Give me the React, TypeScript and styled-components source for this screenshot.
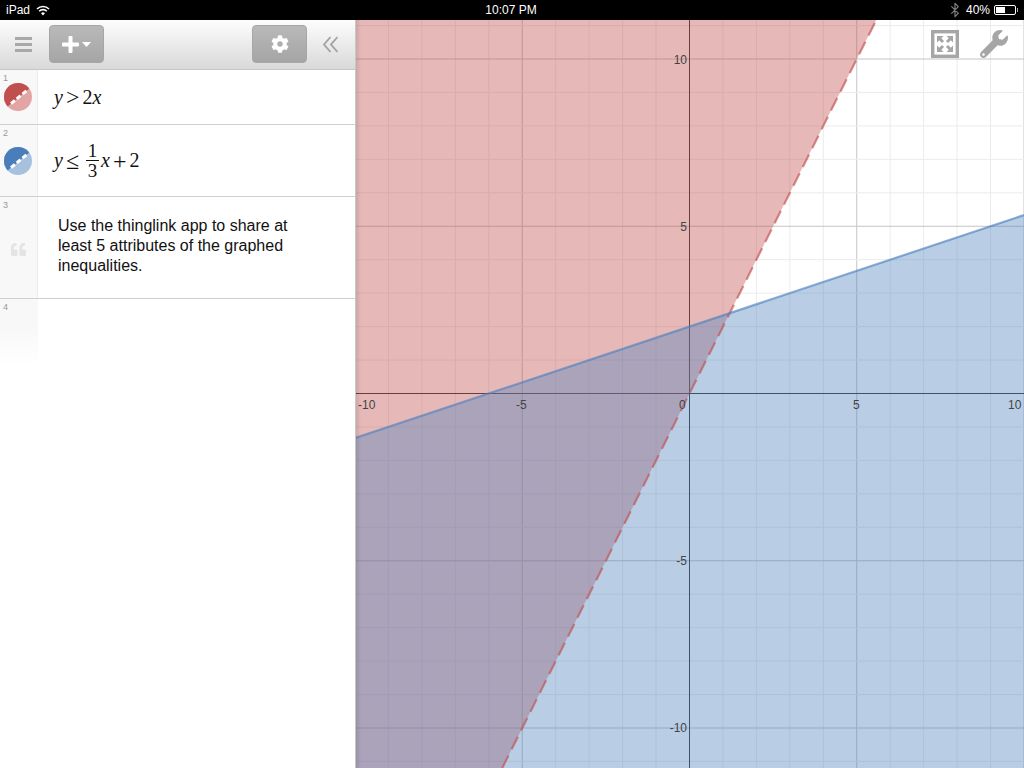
import React from 'react';
import styled, { createGlobalStyle } from 'styled-components';
import { FaCog, FaQuoteLeft, FaWrench } from 'react-icons/fa';
import { Bluetooth } from 'lucide-react';

const GlobalStyle = createGlobalStyle`
  html, body {
    margin: 0;
    height: 100%;
    overflow: hidden;
    background: #fff;
    font-family: "Liberation Sans", Arial, sans-serif;
  }
`;

const Screen = styled.div`
  width: 1024px;
  height: 768px;
  display: flex;
  flex-direction: column;
`;

const StatusBar = styled.div`
  height: 20px;
  flex: none;
  background: #000;
  color: #fff;
  font-size: 12px;
  display: grid;
  grid-template-columns: 1fr auto 1fr;
  align-items: center;
  padding: 0 6px;
`;

const StatusSide = styled.div<{ $end?: boolean }>`
  display: flex;
  align-items: center;
  gap: 6px;
  justify-content: ${p => (p.$end ? 'flex-end' : 'flex-start')};
`;

const Clock = styled.div`
  font-size: 12px;
  font-weight: 400;
  margin-left: -2px;
`;

const BluetoothMark = styled(Bluetooth)`
  margin-right: -3px;
`;

const Battery = styled.div`
  width: 22px;
  height: 10px;
  border: 1px solid #fff;
  border-radius: 2px;
  padding: 1px;
  box-sizing: border-box;
  position: relative;
  margin-left: -2px;
  margin-right: 2px;

  &::before {
    content: '';
    display: block;
    width: 50%;
    height: 100%;
    background: #fff;
  }

  &::after {
    content: '';
    position: absolute;
    right: -3px;
    top: 2px;
    width: 1px;
    height: 4px;
    background: #aaa;
  }
`;

const Main = styled.div`
  flex: 1;
  display: flex;
  min-height: 0;
`;

const Sidebar = styled.div`
  width: 356px;
  flex: none;
  box-sizing: border-box;
  border-right: 1px solid #c8c8c8;
  display: flex;
  flex-direction: column;
  background: #fff;
`;

const Toolbar = styled.div`
  height: 50px;
  flex: none;
  box-sizing: border-box;
  border-bottom: 1px solid #c6c6c6;
  background: linear-gradient(#fdfdfd, #d9d9d9);
  display: flex;
  align-items: center;
  padding: 0 17px 1px 15px;
`;

const Hamburger = styled.div`
  width: 17px;
  height: 15px;
  margin-right: 17px;
  display: flex;
  flex-direction: column;
  justify-content: space-between;

  span {
    display: block;
    height: 3px;
    background: #a8a8a8;
  }
`;

const ToolButton = styled.div`
  width: 55px;
  height: 38px;
  box-sizing: border-box;
  border: 1px solid #a6a6a6;
  border-radius: 4px;
  background: linear-gradient(#b9b9b9, #a5a5a5);
  color: #fff;
  display: flex;
  align-items: center;
  justify-content: center;
  gap: 3px;
`;

const Spacer = styled.div`
  flex: 1;
`;

const Collapse = styled.svg`
  margin-left: 16px;
  width: 15px;
  height: 17px;
`;

const Row = styled.div<{ $height: number; $fade?: boolean }>`
  height: ${p => p.$height}px;
  flex: none;
  box-sizing: border-box;
  display: flex;
  border-bottom: ${p => (p.$fade ? 'none' : '1px solid #cfcfcf')};
`;

const Gutter = styled.div<{ $fade?: boolean }>`
  width: 38px;
  flex: none;
  box-sizing: border-box;
  border-right: 1px solid ${p => (p.$fade ? 'transparent' : '#ececec')};
  background: ${p => (p.$fade ? 'linear-gradient(#f8f8f8 45%, #fff)' : '#f8f8f8')};
  position: relative;
  display: flex;
  align-items: center;
`;

const RowNumber = styled.span`
  position: absolute;
  top: 3px;
  left: 3px;
  font-size: 9px;
  color: #999;
`;

const Swatch = styled.svg`
  width: 28px;
  height: 28px;
  margin-left: 4px;
`;

const QuoteMark = styled.div`
  color: #e4e4e4;
  margin-left: 11px;
  margin-top: 3px;
  display: flex;
`;

const RowBody = styled.div`
  flex: 1;
  display: flex;
  align-items: center;
  padding-left: 16px;
`;

const MathLine = styled.div`
  font-family: "Liberation Serif", "Times New Roman", serif;
  font-size: 20px;
  color: #111;
  display: flex;
  align-items: center;
  white-space: nowrap;
`;

const Var = styled.i`
  font-style: italic;
`;

const Op = styled.span`
  font-size: 24px;
  line-height: 20px;
  margin: 0 3px;
`;

const Fraction = styled.span`
  display: inline-flex;
  flex-direction: column;
  align-items: center;
  font-size: 19px;
  line-height: 19px;
  width: 13px;
  margin: 0 2px 0 4px;

  span + span {
    border-top: 1px solid #111;
    align-self: stretch;
    text-align: center;
  }
`;

const Note = styled.div`
  font-size: 16px;
  line-height: 20px;
  color: #111;
  width: 250px;
  padding-left: 4px;
  margin-top: -3px;
`;

const GraphPane = styled.div`
  flex: 1;
  position: relative;
  background: #fff;
  overflow: hidden;
`;

const GraphSvg = styled.svg`
  display: block;
  width: 100%;
  height: 100%;
`;

const AxisLabel = styled.text`
  font-family: "Liberation Sans", Arial, sans-serif;
  font-size: 12px;
  fill: #444;
`;

const LeftShade = styled.div`
  position: absolute;
  left: 0;
  top: 0;
  bottom: 0;
  width: 5px;
  background: linear-gradient(to right, rgba(0, 0, 0, 0.1), rgba(0, 0, 0, 0));
`;

const GraphTools = styled.div`
  position: absolute;
  top: 10px;
  right: 16px;
  display: flex;
  align-items: center;
  gap: 21px;
  color: #a6a6a6;
`;

const WIDTH = 668;
const HEIGHT = 748;
const OX = 333.5;
const OY = 373.5;
const UNIT = 33.45;

const px = (x: number) => OX + x * UNIT;
const py = (y: number) => OY - y * UNIT;

const range = (from: number, to: number) => {
  const out: number[] = [];
  for (let i = from; i <= to; i++) out.push(i);
  return out;
};

const xMin = -OX / UNIT;
const xMax = (WIDTH - OX) / UNIT;
const yMax = OY / UNIT;
const yMin = (OY - HEIGHT) / UNIT;

const points = (list: [number, number][]) => list.map(([x, y]) => `${x},${y}`).join(' ');

const Graph = () => {
  const redTop = yMax / 2;
  const redBottom = yMin / 2;
  const blueLeft = xMin / 3 + 2;
  const blueRight = xMax / 3 + 2;

  return (
    <GraphSvg viewBox={`0 0 ${WIDTH} ${HEIGHT}`}>
      {range(-10, 10).map(i => (
        <line key={`v${i}`} x1={px(i)} x2={px(i)} y1={0} y2={HEIGHT}
          stroke={i % 5 === 0 ? '#c4c4c4' : '#ececec'} strokeWidth={1} />
      ))}
      {range(-11, 11).map(i => (
        <line key={`h${i}`} y1={py(i)} y2={py(i)} x1={0} x2={WIDTH}
          stroke={i % 5 === 0 ? '#c4c4c4' : '#ececec'} strokeWidth={1} />
      ))}
      <line x1={px(0)} x2={px(0)} y1={0} y2={HEIGHT} stroke="#333" strokeWidth={1} />
      <line y1={py(0)} y2={py(0)} x1={0} x2={WIDTH} stroke="#333" strokeWidth={1} />

      <polygon
        points={points([[0, 0], [px(redTop), 0], [px(redBottom), HEIGHT], [0, HEIGHT]])}
        fill="#c0504d" fillOpacity={0.4}
      />
      <polygon
        points={points([[0, py(blueLeft)], [WIDTH, py(blueRight)], [WIDTH, HEIGHT], [0, HEIGHT]])}
        fill="#4f81bd" fillOpacity={0.4}
      />
      <line x1={px(redBottom)} y1={HEIGHT} x2={px(redTop)} y2={0}
        stroke="#c0504d" strokeOpacity={0.65} strokeWidth={2.2} strokeDasharray="14 7" />
      <line x1={0} y1={py(blueLeft)} x2={WIDTH} y2={py(blueRight)}
        stroke="#4f81bd" strokeOpacity={0.65} strokeWidth={2.2} />

      <AxisLabel x={2} y={389}>-10</AxisLabel>
      <AxisLabel x={160} y={389}>-5</AxisLabel>
      <AxisLabel x={323} y={389}>0</AxisLabel>
      <AxisLabel x={497} y={389}>5</AxisLabel>
      <AxisLabel x={652} y={389}>10</AxisLabel>
      <AxisLabel x={331} y={44} textAnchor="end">10</AxisLabel>
      <AxisLabel x={331} y={211} textAnchor="end">5</AxisLabel>
      <AxisLabel x={331} y={545} textAnchor="end">-5</AxisLabel>
      <AxisLabel x={331} y={712} textAnchor="end">-10</AxisLabel>
    </GraphSvg>
  );
};

const EquationSwatch = ({ dark, light }: { dark: string; light: string }) => (
  <Swatch viewBox="0 0 28 28">
    <defs>
      <clipPath id={`clip${dark.slice(1)}`}>
        <circle cx="14" cy="14" r="14" />
      </clipPath>
    </defs>
    <g clipPath={`url(#clip${dark.slice(1)})`}>
      <rect width="28" height="28" fill={light} />
      <polygon points="-2,28.2 30,1.5 30,-2 -2,-2" fill={dark} />
      <line x1="7" y1="20.7" x2="23" y2="7.3" stroke="#fff" strokeWidth="3" strokeDasharray="5 2.5" />
    </g>
  </Swatch>
);

const FitIcon = () => (
  <svg width="28" height="28" viewBox="0 0 28 28" fill="none" stroke="currentColor">
    <rect x="1.7" y="1.7" width="24.6" height="24.6" strokeWidth="3.4" />
    <path d="M8 8l4 4M20 8l-4 4M8 20l4-4M20 20l-4-4" strokeWidth="3" />
    <path
      d="M6 6h6.5l-6.5 6.5zM22 6h-6.5l6.5 6.5zM6 22h6.5l-6.5-6.5zM22 22h-6.5l6.5-6.5z"
      fill="currentColor"
      stroke="none"
    />
  </svg>
);

const WifiIcon = () => (
  <svg width="14" height="11" viewBox="0 0 14 11" fill="none" stroke="#fff" strokeWidth="1.6">
    <path d="M1 4a8.5 8.5 0 0 1 12 0" />
    <path d="M3.2 6.2a5.4 5.4 0 0 1 7.6 0" />
    <path d="M7 10.4L5 8.2a2.9 2.9 0 0 1 4 0z" fill="#fff" stroke="none" />
  </svg>
);

const App: React.FC = () => (
  <>
    <GlobalStyle />
    <Screen>
      <StatusBar>
        <StatusSide>
          <span>iPad</span>
          <WifiIcon />
        </StatusSide>
        <Clock>10:07 PM</Clock>
        <StatusSide $end>
          <BluetoothMark size={16} color="#808080" strokeWidth={1.8} />
          <span>40%</span>
          <Battery />
        </StatusSide>
      </StatusBar>
      <Main>
        <Sidebar>
          <Toolbar>
            <Hamburger>
              <span />
              <span />
              <span />
            </Hamburger>
            <ToolButton>
              <svg width="17" height="17" viewBox="0 0 17 17" fill="#fff">
                <rect x="6.5" y="0" width="4" height="17" rx="1" />
                <rect x="0" y="6.5" width="17" height="4" rx="1" />
              </svg>
              <svg width="9" height="5" viewBox="0 0 9 5" fill="#fff">
                <path d="M0 0h9L4.5 5z" />
              </svg>
            </ToolButton>
            <Spacer />
            <ToolButton>
              <FaCog size={18} />
            </ToolButton>
            <Collapse viewBox="0 0 15 17" fill="none" stroke="#a3a3a3" strokeWidth="1.9">
              <path d="M7.5 1L1 8.5 7.5 16M14.5 1L8 8.5l6.5 7.5" />
            </Collapse>
          </Toolbar>
          <Row $height={55}>
            <Gutter>
              <RowNumber>1</RowNumber>
              <EquationSwatch dark="#c0504d" light="#e2a5a3" />
            </Gutter>
            <RowBody>
              <MathLine>
                <Var>y</Var>
                <Op>&gt;</Op>
                2<Var>x</Var>
              </MathLine>
            </RowBody>
          </Row>
          <Row $height={72}>
            <Gutter>
              <RowNumber>2</RowNumber>
              <EquationSwatch dark="#4a7ebb" light="#a7c0de" />
            </Gutter>
            <RowBody>
              <MathLine>
                <Var>y</Var>
                <Op>≤</Op>
                <Fraction>
                  <span>1</span>
                  <span>3</span>
                </Fraction>
                <Var>x</Var>
                <Op>+</Op>
                2
              </MathLine>
            </RowBody>
          </Row>
          <Row $height={102}>
            <Gutter>
              <RowNumber>3</RowNumber>
              <QuoteMark>
                <FaQuoteLeft size={15} />
              </QuoteMark>
            </Gutter>
            <RowBody>
              <Note>Use the thinglink app to share at least 5 attributes of the graphed inequalities.</Note>
            </RowBody>
          </Row>
          <Row $height={66} $fade>
            <Gutter $fade>
              <RowNumber>4</RowNumber>
            </Gutter>
          </Row>
        </Sidebar>
        <GraphPane>
          <Graph />
          <LeftShade />
          <GraphTools>
            <FitIcon />
            <FaWrench size={28} />
          </GraphTools>
        </GraphPane>
      </Main>
    </Screen>
  </>
);

export default App;
